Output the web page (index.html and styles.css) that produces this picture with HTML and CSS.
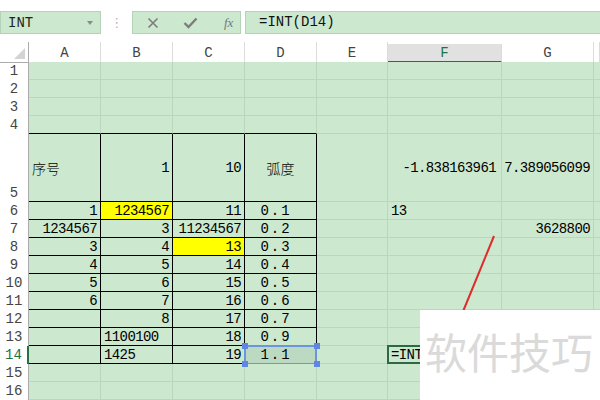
FILE: index.html
```html
<!DOCTYPE html>
<html lang="zh">
<head>
<meta charset="utf-8">
<title>INT</title>
<link rel="stylesheet" href="styles.css">
</head>
<body>
<div class="toolbar">
  <div class="namebox"><span>INT</span><span class="dd"></span></div>
  <div class="sep">⋮</div>
  <div class="fxbox">
    <svg class="ico" width="12" height="12" viewBox="0 0 12 12"><path d="M1.5 1.5 L10.5 10.5 M10.5 1.5 L1.5 10.5" stroke="#7d7d7d" stroke-width="1.6" fill="none"/></svg>
    <svg class="ico" width="15" height="12" viewBox="0 0 15 12"><path d="M1.5 6 L5.5 10 L13.5 1.5" stroke="#7d7d7d" stroke-width="2.4" fill="none"/></svg>
    <span class="fx">fx</span>
  </div>
  <div class="formula">=INT(D14)</div>
</div>

<div class="sheet">
  <div class="row hdr"><div class="corner"></div><div class="ch">A</div><div class="ch">B</div><div class="ch">C</div><div class="ch">D</div><div class="ch">E</div><div class="ch act">F</div><div class="ch">G</div><div class="ch"></div></div>
  <div class="row"><div class="rh">1</div><div class="c"></div><div class="c"></div><div class="c"></div><div class="c"></div><div class="c"></div><div class="c"></div><div class="c"></div><div class="c"></div></div>
  <div class="row"><div class="rh">2</div><div class="c"></div><div class="c"></div><div class="c"></div><div class="c"></div><div class="c"></div><div class="c"></div><div class="c"></div><div class="c"></div></div>
  <div class="row"><div class="rh">3</div><div class="c"></div><div class="c"></div><div class="c"></div><div class="c"></div><div class="c"></div><div class="c"></div><div class="c"></div><div class="c"></div></div>
  <div class="row"><div class="rh">4</div><div class="c tb"></div><div class="c tb"></div><div class="c tb"></div><div class="c tb"></div><div class="c"></div><div class="c"></div><div class="c"></div><div class="c"></div></div>
  <div class="row tall"><div class="rh">5</div><div class="c t l cjk">序号</div><div class="c t r">1</div><div class="c t r">10</div><div class="c t m cjk">弧度</div><div class="c"></div><div class="c r f5">-1.838163961</div><div class="c r">7.389056099</div><div class="c"></div></div>
  <div class="row"><div class="rh">6</div><div class="c t r">1</div><div class="c t r y">1234567</div><div class="c t r">11</div><div class="c t m n">0.1</div><div class="c"></div><div class="c l">13</div><div class="c"></div><div class="c"></div></div>
  <div class="row"><div class="rh">7</div><div class="c t r">1234567</div><div class="c t r">3</div><div class="c t r">11234567</div><div class="c t m n">0.2</div><div class="c"></div><div class="c"></div><div class="c r">3628800</div><div class="c"></div></div>
  <div class="row"><div class="rh">8</div><div class="c t r">3</div><div class="c t r">4</div><div class="c t r y">13</div><div class="c t m n">0.3</div><div class="c"></div><div class="c"></div><div class="c"></div><div class="c"></div></div>
  <div class="row"><div class="rh">9</div><div class="c t r">4</div><div class="c t r">5</div><div class="c t r">14</div><div class="c t m n">0.4</div><div class="c"></div><div class="c"></div><div class="c"></div><div class="c"></div></div>
  <div class="row"><div class="rh">10</div><div class="c t r">5</div><div class="c t r">6</div><div class="c t r">15</div><div class="c t m n">0.5</div><div class="c"></div><div class="c"></div><div class="c"></div><div class="c"></div></div>
  <div class="row"><div class="rh">11</div><div class="c t r">6</div><div class="c t r">7</div><div class="c t r">16</div><div class="c t m n">0.6</div><div class="c"></div><div class="c"></div><div class="c"></div><div class="c"></div></div>
  <div class="row"><div class="rh">12</div><div class="c t r"></div><div class="c t r">8</div><div class="c t r">17</div><div class="c t m n red">0.7</div><div class="c"></div><div class="c"></div><div class="c"></div><div class="c"></div></div>
  <div class="row"><div class="rh">13</div><div class="c t r"></div><div class="c t l">1100100</div><div class="c t r">18</div><div class="c t m n">0.9</div><div class="c"></div><div class="c"></div><div class="c"></div><div class="c"></div></div>
  <div class="row"><div class="rh act">14</div><div class="c t r"></div><div class="c t l">1425</div><div class="c t r">19</div><div class="c t m n sel">1.1<span class="hd h1"></span><span class="hd h2"></span><span class="hd h3"></span><span class="hd h4"></span></div><div class="c"></div><div class="c l cur">=INT(D14)</div><div class="c"></div><div class="c"></div></div>
  <div class="row"><div class="rh">15</div><div class="c"></div><div class="c"></div><div class="c"></div><div class="c"></div><div class="c"></div><div class="c"></div><div class="c"></div><div class="c"></div></div>
  <div class="row"><div class="rh">16</div><div class="c"></div><div class="c"></div><div class="c"></div><div class="c"></div><div class="c"></div><div class="c"></div><div class="c"></div><div class="c"></div></div>
</div>

<svg class="arrow" width="600" height="400" viewBox="0 0 600 400"><path d="M494 236 L462 314" stroke="#dd2c2c" stroke-width="2" fill="none"/></svg>
<div class="watermark">软件技巧</div>
</body>
</html>
```

FILE: styles.css
```css
body {
  margin: 0;
  width: 600px;
  height: 400px;
  overflow: hidden;
  background: #fff;
  font-family: "Liberation Mono", "DejaVu Sans Mono", monospace;
  font-size: 14px;
  letter-spacing: -0.6px;
  color: #000;
  position: relative;
}

.toolbar {
  height: 42px;
  box-sizing: border-box;
  padding-top: 11px;
  display: flex;
  align-items: flex-start;
}

.namebox {
  width: 101px;
  height: 23px;
  box-sizing: border-box;
  background: #cce8cf;
  border: 1px solid #b3d2b7;
  display: flex;
  align-items: center;
  justify-content: space-between;
  padding: 0 7px 0 7px;
  font-size: 14px;
  letter-spacing: 0;
  color: #222;
}

.dd {
  width: 0;
  height: 0;
  border-left: 3.5px solid transparent;
  border-right: 3.5px solid transparent;
  border-top: 4px solid #8a8a8a;
}

.sep {
  width: 31px;
  text-align: center;
  color: #b5b5b5;
  font-family: "DejaVu Sans", sans-serif;
  font-size: 13px;
  line-height: 23px;
}

.fxbox {
  width: 109px;
  height: 23px;
  box-sizing: border-box;
  background: #cce8cf;
  border: 1px solid #b3d2b7;
  display: flex;
  align-items: center;
  padding-left: 14px;
  gap: 24px;
}

.fx {
  font-family: "Liberation Serif", serif;
  font-style: italic;
  font-size: 13px;
  letter-spacing: 0;
  color: #777;
  margin-left: 2px;
}

.formula {
  flex: 1;
  margin-left: 4px;
  height: 23px;
  box-sizing: border-box;
  background: #cce8cf;
  border: 1px solid #b3d2b7;
  border-right: none;
  padding-left: 13px;
  line-height: 21px;
  font-size: 14px;
  letter-spacing: 0;
  color: #111;
}

.sheet {
  display: flex;
  flex-direction: column;
}

.row {
  display: grid;
  grid-template-columns: 29px 72px 72px 72px 72px 71px 114px 92px 1fr;
  height: 18px;
}

.row.hdr {
  height: 20px;
}

.row.tall {
  height: 68px;
}

.corner,
.ch {
  box-sizing: border-box;
  background: #fff;
  border-bottom: 1px solid #ababab;
  border-right: 1px solid #dcdcdc;
}

.corner {
  position: relative;
  border-right-color: #ababab;
}

.corner::after {
  content: "";
  position: absolute;
  right: 3px;
  bottom: 3px;
  width: 0;
  height: 0;
  border-left: 11px solid transparent;
  border-bottom: 11px solid #d4d4d4;
}

.ch {
  display: flex;
  align-items: center;
  justify-content: center;
  font-size: 14px;
  letter-spacing: 0;
  color: #444;
  padding-top: 1px;
}

.ch.act {
  background: #e1e1e1;
  color: #217346;
  border-bottom: 2px solid #217346;
  margin-top: 2px;
}

.rh {
  box-sizing: border-box;
  background: #fff;
  border-right: 1px solid #ababab;
  display: flex;
  align-items: flex-end;
  justify-content: center;
  padding-bottom: 1px;
  font-size: 14px;
  letter-spacing: 0;
  color: #444;
}

.rh.act {
  color: #217346;
  border-right: 2px solid #217346;
}

.c {
  box-sizing: border-box;
  background: #cce8cf;
  border-right: 1px solid #bcd5bf;
  border-bottom: 1px solid #bcd5bf;
  display: flex;
  align-items: center;
  white-space: nowrap;
  padding: 0 3px;
  position: relative;
}

.c.tb {
  border-bottom-color: #000;
}

.c.t {
  border-right-color: #000;
  border-bottom-color: #000;
}

.r { justify-content: flex-end; }
.l { justify-content: flex-start; }
.m { justify-content: center; }

.f5 { padding-right: 5px; }

.n {
  letter-spacing: 2px;
  padding-right: 12px;
}

.cjk {
  font-family: "Noto Sans CJK SC", sans-serif;
  font-size: 14px;
  font-weight: 300;
  letter-spacing: 0;
}

.y {
  background: #ffff00;
}

.red {
  border-right-color: #e23a3a;
}

.sel {
  background: #bcd9c2;
}

.sel::after {
  content: "";
  position: absolute;
  left: -1px;
  top: -1px;
  right: -1px;
  bottom: -2px;
  border: 2px solid #6d95df;
}

.hd {
  position: absolute;
  width: 6px;
  height: 6px;
  background: #5f86e0;
  z-index: 2;
}

.h1 { left: -3px; top: -3px; }
.h2 { right: -4px; top: -3px; }
.h3 { left: -3px; bottom: -4px; }
.h4 { right: -4px; bottom: -4px; }

.cur::after {
  content: "";
  position: absolute;
  left: -1px;
  top: -1px;
  right: 0;
  bottom: -1px;
  border: 2px solid #2b6a45;
}

.arrow {
  position: absolute;
  left: 0;
  top: 0;
  pointer-events: none;
}

.watermark {
  position: absolute;
  left: 420px;
  top: 310px;
  width: 180px;
  height: 90px;
  background: #fff;
  box-sizing: border-box;
  padding: 17px 0 0 5px;
  font-family: "Noto Sans CJK SC", sans-serif;
  font-size: 42px;
  line-height: 48px;
  letter-spacing: 0;
  color: #dadada;
  white-space: nowrap;
}
```
